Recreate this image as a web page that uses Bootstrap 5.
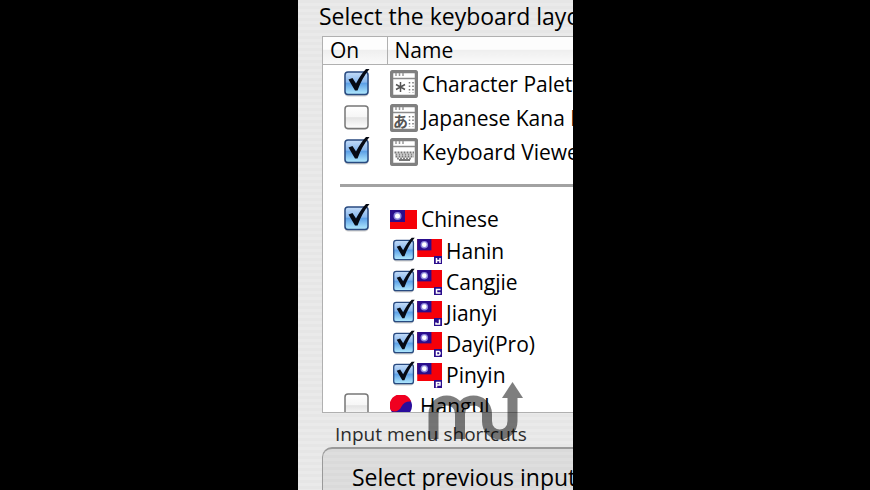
<!DOCTYPE html>
<html lang="en">
<head>
<meta charset="utf-8">
<meta name="viewport" content="width=device-width, initial-scale=1">
<title>Input Menu</title>
<link href="https://cdn.jsdelivr.net/npm/bootstrap@5.3.0/dist/css/bootstrap.min.css" rel="stylesheet">
<style>
body{background:#000;color:#000;font-family:"Open Sans","Noto Sans",sans-serif;font-size:21px;line-height:30px;padding-left:1px}
.pane{max-width:275px;min-height:100vh;padding-left:22px;background:repeating-linear-gradient(#e6e6e6 0 3px,#eaeaea 3px 6px)}
.pane-title{font-size:23px;line-height:30px;padding:1px 0 5px;margin-left:-1px}
.listbox{max-height:377px;margin-left:2px;border:1px solid #b0b0b0;border-right:0;background:#fff}
.list-table{table-layout:fixed;border-collapse:collapse}
.list-table th{font-weight:400;height:27px;line-height:25px;padding:0 7px;border-bottom:1px solid #b0b0b0;background:linear-gradient(#fdfdfd 0 45%,#efefef 50%,#fafafa)}
.list-table th+th{border-left:1px solid #b0b0b0}
.col-on{width:64px}
.list-table td{height:34px;padding:0}
.list-table tbody::before{content:"";display:block;height:2px}
.list-table td:first-child{padding-left:20px}
.list-table td+td{padding-left:3px}
.list-table .sub td{height:31px}
.list-table .sub td+td{padding-left:5px}
.list-table .group td{height:33px}
.list-table .last td{height:30px}
.list-table .rule td{height:34px;padding:0 0 0 17px}
.rule hr{height:3px;border:0;background:#a2a2a2;opacity:1;margin:0}
.aqua{appearance:none;-webkit-appearance:none;display:block;flex:none;margin:0;border:0;width:28px;height:30px;margin-top:-4px;background:url("data:image/svg+xml,%3Csvg xmlns='http://www.w3.org/2000/svg' viewBox='0 0 28 30'%3E%3Cdefs%3E%3ClinearGradient id='g' x2='0' y2='1'%3E%3Cstop stop-color='%23fff'/%3E%3Cstop offset='.48' stop-color='%23f6f6f6'/%3E%3Cstop offset='.52' stop-color='%23e4e4e4'/%3E%3Cstop offset='1' stop-color='%23fff'/%3E%3C/linearGradient%3E%3C/defs%3E%3Crect x='2' y='5' width='23' height='24' rx='4' fill='%23000' opacity='.18'/%3E%3Crect x='2' y='5' width='23' height='22.500' rx='3' fill='url(%23g)' stroke='%23777' stroke-width='1.500'/%3E%3C/svg%3E") center/100% 100% no-repeat}
.aqua:checked{background-image:url("data:image/svg+xml,%3Csvg xmlns='http://www.w3.org/2000/svg' viewBox='0 0 28 30'%3E%3Cdefs%3E%3ClinearGradient id='g' x2='0' y2='1'%3E%3Cstop stop-color='%23c4dcf8'/%3E%3Cstop offset='.45' stop-color='%2388b8ee'/%3E%3Cstop offset='.5' stop-color='%235b9fe6'/%3E%3Cstop offset='1' stop-color='%23b4ecff'/%3E%3C/linearGradient%3E%3C/defs%3E%3Crect x='1.500' y='5' width='24' height='24.500' rx='4' fill='%23000' opacity='.2'/%3E%3Crect x='2' y='5' width='23' height='22.500' rx='3' fill='url(%23g)' stroke='%23284a80' stroke-width='1.500'/%3E%3Cpath d='M5.500 12.500L9.500 11 13 16.500Q18 7 23 2L26.500 2Q19 11 14.500 23.500L12 23.500Z' fill='%23060a14'/%3E%3C/svg%3E")}
.aqua-sm{width:24px;height:26px;margin-right:1px}
.win{width:28px;height:28px;flex:none}
.list-table label{white-space:nowrap}
.shortcuts{font-size:19px;line-height:24px;padding:9px 0 0 15px;margin-bottom:1px;color:#2c2c2c}
.groupbox{min-height:56px;border:2px solid #999;border-width:2px 0 0 1px;border-radius:10px 0 0 0;margin-left:2px;padding:13px 0 0 29px;font-size:23px;background:repeating-linear-gradient(#dadada 0 3px,#dedede 3px 6px)}
.watermark{left:130px;top:380px;width:96px;height:60px;pointer-events:none}
</style>
<script src="https://cdn.jsdelivr.net/npm/bootstrap@5.3.0/dist/js/bootstrap.bundle.min.js"></script>
</head>
<body>
<svg class="d-none" aria-hidden="true">
  <symbol id="frame" viewBox="0 0 28 28"><rect x="1.500" y="1.500" width="25" height="25" rx="2" fill="#fff" stroke="#808080" stroke-width="3.500"/><path d="M3 8.500H25" stroke="#8a8a8a" stroke-width="1.500"/><path d="M6 3V6M9.500 3V6M13 3V6" stroke="#999" stroke-width="1.500"/></symbol>
  <symbol id="flag" viewBox="0 0 27 19"><path fill="#f60008" d="M0 0H27V19H0z"/><path fill="#2a0d8c" d="M0 0H15V12H0z"/><circle cx="7.500" cy="6" r="4" fill="#8c86dc"/><circle cx="7.500" cy="6" r="2.500" fill="#fff"/></symbol>
  <symbol id="tag" viewBox="0 0 26 25"><use href="#flag" width="26" height="18"/><path fill="#2a0d8c" d="M17 17H25V25H17z"/></symbol>
</svg>
<main class="pane position-relative mx-auto overflow-hidden d-flex flex-column">
  <h1 class="pane-title mb-0 fw-normal text-nowrap">Select the keyboard layo</h1>
  <div class="listbox overflow-hidden">
    <table class="list-table w-100">
      <thead><tr><th class="col-on" scope="col">On</th><th scope="col">Name</th></tr></thead>
      <tbody>
        <tr><td><input class="aqua" type="checkbox" id="pal" checked></td><td><label for="pal" class="d-flex align-items-center gap-1"><svg class="win" viewBox="0 0 28 28"><use href="#frame"/><path d="M10.500 12V22M6 14.500L15 19.500M15 14.500L6 19.500" stroke="#555" stroke-width="1.500"/><path d="M19.500 12V23M23 12V23" stroke="#777" stroke-width="1.500" stroke-dasharray="1.500 2"/></svg>Character Palett</label></td></tr>
        <tr><td><input class="aqua" type="checkbox" id="kana"></td><td><label for="kana" class="d-flex align-items-center gap-1"><svg class="win" viewBox="0 0 28 28"><use href="#frame"/><text x="3" y="23" font-family="Noto Sans CJK JP,sans-serif" font-size="15" font-weight="700" fill="#555">あ</text><path d="M19.500 12V23M23 12V23" stroke="#777" stroke-width="1.500" stroke-dasharray="1.500 2"/></svg>Japanese Kana P</label></td></tr>
        <tr><td><input class="aqua" type="checkbox" id="view" checked></td><td><label for="view" class="d-flex align-items-center gap-1"><svg class="win" viewBox="0 0 28 28"><use href="#frame"/><path d="M4.500 14.500H24M5.500 18.500H24" stroke="#777" stroke-width="2" stroke-dasharray="2 1"/><path d="M5.500 16.500H24M7 20.500H22" stroke="#888" stroke-width="2" stroke-dasharray="2 1"/><path d="M9 22H20" stroke="#777" stroke-width="2"/></svg>Keyboard Viewe</label></td></tr>
        <tr class="rule"><td colspan="2"><hr></td></tr>
        <tr class="group"><td><input class="aqua" type="checkbox" id="zh" checked></td><td><label for="zh" class="d-flex align-items-center gap-1"><svg width="27" height="19"><use href="#flag"/></svg>Chinese</label></td></tr>
        <tr class="sub"><td></td><td><div class="d-flex align-items-center"><input class="aqua aqua-sm" type="checkbox" id="s1" checked><label for="s1" class="d-flex align-items-center gap-1"><svg width="25" height="25" viewBox="0 0 25 25"><use href="#tag" width="26" height="25"/><path d="M19.500 19V24M23 19V24M19.500 21.500H23" stroke="#fff" fill="none" stroke-width="1.500"/></svg>Hanin</label></div></td></tr>
        <tr class="sub"><td></td><td><div class="d-flex align-items-center"><input class="aqua aqua-sm" type="checkbox" id="s2" checked><label for="s2" class="d-flex align-items-center gap-1"><svg width="25" height="25" viewBox="0 0 25 25"><use href="#tag" width="26" height="25"/><path d="M23.500 19.500H19.500V23H23.500" stroke="#fff" fill="none" stroke-width="1.500"/></svg>Cangjie</label></div></td></tr>
        <tr class="sub"><td></td><td><div class="d-flex align-items-center"><input class="aqua aqua-sm" type="checkbox" id="s3" checked><label for="s3" class="d-flex align-items-center gap-1"><svg width="25" height="25" viewBox="0 0 25 25"><use href="#tag" width="26" height="25"/><path d="M22.500 18.500V23H19V21.500" stroke="#fff" fill="none" stroke-width="1.500"/></svg>Jianyi</label></div></td></tr>
        <tr class="sub"><td></td><td><div class="d-flex align-items-center"><input class="aqua aqua-sm" type="checkbox" id="s4" checked><label for="s4" class="d-flex align-items-center gap-1"><svg width="25" height="25" viewBox="0 0 25 25"><use href="#tag" width="26" height="25"/><path d="M19.500 19.500H22L23 20.500V22L22 23H19.500Z" stroke="#fff" fill="none" stroke-width="1.500"/></svg>Dayi(Pro)</label></div></td></tr>
        <tr class="sub"><td></td><td><div class="d-flex align-items-center"><input class="aqua aqua-sm" type="checkbox" id="s5" checked><label for="s5" class="d-flex align-items-center gap-1"><svg width="25" height="25" viewBox="0 0 25 25"><use href="#tag" width="26" height="25"/><path d="M19.500 24.500V19.500H23V22H19.500" stroke="#fff" fill="none" stroke-width="1.500"/></svg>Pinyin</label></div></td></tr>
        <tr class="last"><td><input class="aqua" type="checkbox" id="ko"></td><td><label for="ko" class="d-flex align-items-center gap-2"><svg width="22" height="22" viewBox="0 0 22 22"><circle cx="11" cy="11" r="11" fill="#2a0d9c"/><path d="M1 15.500A11 11 0 1 1 21 6.500C17 6 13 8 11.500 11.500C10 15.500 5 18 1 15.500Z" fill="#f00020"/></svg>Hangul</label></td></tr>
      </tbody>
    </table>
  </div>
  <h2 class="shortcuts fw-normal text-nowrap">Input menu shortcuts</h2>
  <section class="groupbox flex-grow-1 text-nowrap">Select previous input</section>
  <svg class="watermark position-absolute" viewBox="0 0 96 60" aria-hidden="true"><g opacity=".5"><path d="M5.500 59V34C5.500 16 32 16 32 34V59M32 34C32 16 59 16 59 34V41C59 59 84.500 59 84.500 41V17" fill="none" stroke="#000" stroke-width="10"/><path d="M74 18L84.500 2L95 18Z"/></g></svg>
</main>
</body>
</html>
